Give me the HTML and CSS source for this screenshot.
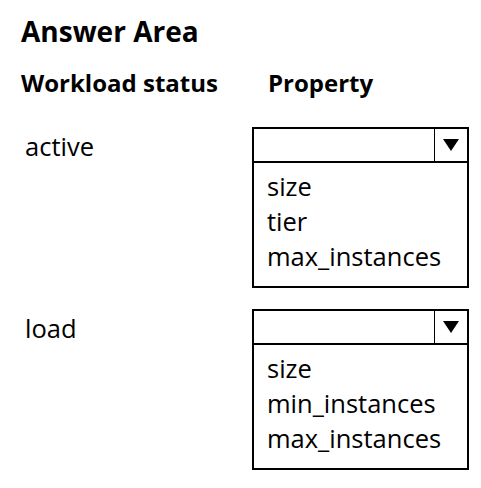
FILE: index.html
```html
<!DOCTYPE html>
<html lang="en">

<head>
    <meta charset="UTF-8">
    <title>Answer Area</title>
    <link rel="stylesheet" href="styles.css">
</head>

<body>
    <div class="answer-area">
        <h1 class="title">Answer Area</h1>

        <div class="heading-row">
            <div class="heading-status">Workload status</div>
            <div class="heading-property">Property</div>
        </div>

        <div class="answer-row">
            <div class="status-label">active</div>
            <div class="dropdown">
                <div class="dropdown-header">
                    <div class="dropdown-value"></div>
                    <div class="dropdown-arrow">
                        <svg width="16" height="12" viewBox="0 0 16 12"><path d="M0 0H16L8 12Z" fill="#000"/></svg>
                    </div>
                </div>
                <ul class="dropdown-options">
                    <li>size</li>
                    <li>tier</li>
                    <li>max_instances</li>
                </ul>
            </div>
        </div>

        <div class="answer-row">
            <div class="status-label">load</div>
            <div class="dropdown">
                <div class="dropdown-header">
                    <div class="dropdown-value"></div>
                    <div class="dropdown-arrow">
                        <svg width="16" height="12" viewBox="0 0 16 12"><path d="M0 0H16L8 12Z" fill="#000"/></svg>
                    </div>
                </div>
                <ul class="dropdown-options">
                    <li>size</li>
                    <li>min_instances</li>
                    <li>max_instances</li>
                </ul>
            </div>
        </div>
    </div>
</body>

</html>
```

FILE: styles.css
```css
* {
    margin: 0;
    padding: 0;
    box-sizing: border-box;
}

body {
    font-family: 'Open Sans', 'Noto Sans', sans-serif;
    background: white;
    color: #000;
}

.answer-area {
    padding: 13px 0 0 21px;
}

.title {
    font-size: 28px;
    font-weight: bold;
    line-height: 36px;
}

.heading-row {
    display: flex;
    margin-top: 18px;
    font-size: 24px;
    font-weight: bold;
    line-height: 32px;
}

.heading-status {
    width: 247px;
}

.answer-row {
    display: flex;
    margin-top: 28px;
}

.answer-row + .answer-row {
    margin-top: 21px;
}

.status-label {
    width: 231px;
    padding: 2px 0 0 4px;
    font-size: 25.5px;
    line-height: 34px;
}

.dropdown {
    width: 217px;
    border: 2px solid #000;
}

.dropdown-header {
    display: flex;
    height: 34px;
    border-bottom: 2px solid #000;
}

.dropdown-value {
    flex: 1;
}

.dropdown-arrow {
    display: flex;
    align-items: center;
    justify-content: center;
    width: 33px;
    border-left: 1px solid #000;
}

.dropdown-options {
    list-style: none;
    padding: 6px 0 12px 13px;
    font-size: 25.5px;
    line-height: 35px;
}
```
